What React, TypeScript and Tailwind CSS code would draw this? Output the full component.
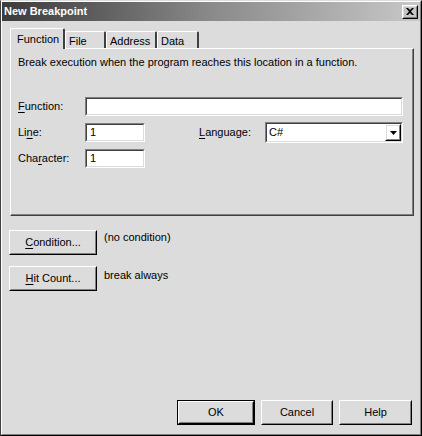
import type { ReactNode } from "react";

const ui = "font-['Tahoma','Liberation_Sans',sans-serif] text-[11px] leading-[13px] text-black";

function Key({ children }: { children: ReactNode }) {
  return <span className="underline underline-offset-[2px]">{children}</span>;
}

function Sunken({ className = "", children }: { className?: string; children?: ReactNode }) {
  return (
    <div className={`border border-t-[#808080] border-l-[#808080] border-r-white border-b-white ${className}`}>
      <div className="h-full border border-t-[#404040] border-l-[#404040] border-r-[#dcdcdc] border-b-[#dcdcdc] bg-white flex items-center pl-[3px]">
        {children}
      </div>
    </div>
  );
}

function Button({ className = "", children, isDefault = false }: { className?: string; children: ReactNode; isDefault?: boolean }) {
  const body = (
    <div className="h-full border border-t-white border-l-white border-r-black border-b-black">
      <div className="h-full border border-t-[#dcdcdc] border-l-[#dcdcdc] border-r-[#808080] border-b-[#808080] flex items-center justify-center">
        {children}
      </div>
    </div>
  );
  if (isDefault) {
    return <div className={`border border-black ${className}`}>{body}</div>;
  }
  return <div className={className}>{body}</div>;
}

function Tab({ label, active = false, className = "" }: { label: string; active?: boolean; className?: string }) {
  if (active) {
    return (
      <div className={`relative z-10 h-[21px] border-l border-t border-white border-r-2 border-r-[#404040] rounded-t-[2px] bg-[#dcdcdc] px-[6px] pt-[4px] ${className}`}>
        {label}
      </div>
    );
  }
  return (
    <div className={`mt-[3px] h-[18px] border-l border-t border-white border-r-2 border-r-[#404040] rounded-t-[2px] pl-[3px] pt-[3px] ${className}`}>
      {label}
    </div>
  );
}

export default function App() {
  return (
    <div className={`${ui} w-[422px] h-[436px] bg-[#dcdcdc] border border-t-[#dcdcdc] border-l-[#404040] border-r-black border-b-black`}>
      <div className="h-full flex flex-col border border-t-white border-l-white border-r-[#808080] border-b-[#808080]">
        {/* Title bar */}
        <div className="h-[19px] flex items-center justify-between bg-gradient-to-r from-[#3c3c3c] via-[#8a8a8a] to-[#c8c8c8] px-[2px]">
          <span className="font-bold text-white text-[11px]">New Breakpoint</span>
          <div className="w-[16px] h-[14px]">
            <Button className="h-full">
              <svg width="8" height="7" viewBox="0 0 8 7">
                <path d="M0 0 L2 0 L4 2 L6 0 L8 0 L5 3.5 L8 7 L6 7 L4 5 L2 7 L0 7 L3 3.5 Z" fill="black" />
              </svg>
            </Button>
          </div>
        </div>

        {/* Tabs */}
        <div className="ml-[8px] mt-[7px] flex items-start">
          <Tab label="Function" active className="w-[55px]" />
          <Tab label="File" className="w-[41px]" />
          <Tab label="Address" className="w-[51px]" />
          <Tab label="Data" className="w-[42px]" />
        </div>

        {/* Tab panel */}
        <div className="-mt-px ml-[8px] w-[404px] h-[168px] border-l border-t border-white border-r border-b border-r-[#404040] border-b-[#404040]">
          <div className="h-full border-r border-b border-r-[#808080] border-b-[#808080] pl-[7px] pt-[7px]">
            <div>Break execution when the program reaches this location in a function.</div>

            <div className="mt-[28px] flex items-center h-[19px]">
              <div className="w-[67px]"><Key>F</Key>unction:</div>
              <Sunken className="w-[318px] h-[19px]" />
            </div>

            <div className="mt-[6px] flex items-center h-[21px]">
              <div className="w-[67px]">Li<Key>n</Key>e:</div>
              <Sunken className="w-[60px] h-[19px]">1</Sunken>
              <div className="ml-[54px] w-[66px]"><Key>L</Key>anguage:</div>
              <div className="w-[138px] h-[21px] border border-t-[#808080] border-l-[#808080] border-r-white border-b-white">
                <div className="h-full border border-t-[#404040] border-l-[#404040] border-r-[#dcdcdc] border-b-[#dcdcdc] bg-white flex items-center justify-between">
                  <span className="pl-[2px]">C#</span>
                  <div className="w-[16px] h-[17px]">
                    <Button className="h-full">
                      <svg width="7" height="4" viewBox="0 0 7 4">
                        <path d="M0 0 L7 0 L3.5 4 Z" fill="black" />
                      </svg>
                    </Button>
                  </div>
                </div>
              </div>
            </div>

            <div className="mt-[6px] flex items-center h-[19px]">
              <div className="w-[67px]">Cha<Key>r</Key>acter:</div>
              <Sunken className="w-[60px] h-[19px]">1</Sunken>
            </div>
          </div>
        </div>

        {/* Condition / Hit Count */}
        <div className="mt-[14px] ml-[7px] flex items-start">
          <Button className="w-[88px] h-[25px]"><span><Key>C</Key>ondition...</span></Button>
          <div className="ml-[7px] mt-px">(no condition)</div>
        </div>
        <div className="mt-[11px] ml-[7px] flex items-start">
          <Button className="w-[88px] h-[25px]"><span><Key>H</Key>it Count...</span></Button>
          <div className="ml-[7px] mt-[3px]">break always</div>
        </div>

        {/* Bottom buttons */}
        <div className="mt-auto mb-[9px] flex justify-end gap-[6px] pr-[8px]">
          <Button isDefault className="w-[78px] h-[25px]">OK</Button>
          <Button className="w-[72px] h-[25px]">Cancel</Button>
          <Button className="w-[73px] h-[25px]">Help</Button>
        </div>
      </div>
    </div>
  );
}
